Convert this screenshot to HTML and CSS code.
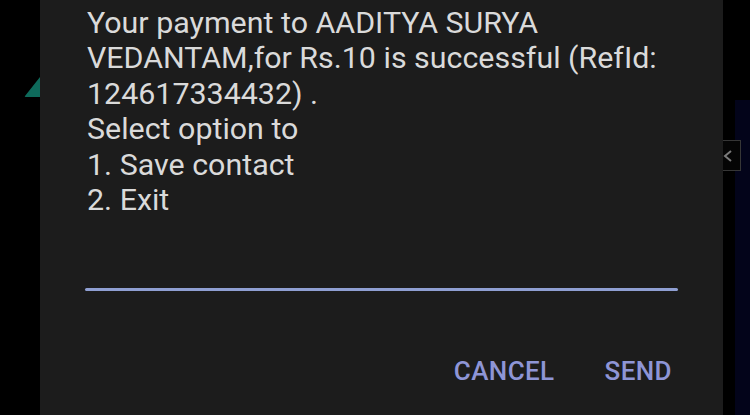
FILE: index.html
```html
<!DOCTYPE html>
<html lang="en">
<head>
  <meta charset="UTF-8" />
  <meta name="viewport" content="width=device-width, initial-scale=1.0" />
  <title>USSD</title>
  <link rel="stylesheet" href="styles.css">
</head>
<body>
  <div class="screen">
    <div class="left-gutter">
      <svg class="fab-tip" width="20" height="22" viewBox="0 0 20 22">
        <path d="M16 1 L1 20 Q0 21 2 21 L16 21 Z" fill="#0e6a5b"/>
      </svg>
    </div>

    <div class="dialog">
      <p class="message">
        Your payment to AADITYA SURYA<br>
        VEDANTAM,for Rs.10 is successful (RefId:<br>
        124617334432) .<br>
        Select option to<br>
        1. Save contact<br>
        2. Exit
      </p>
      <div class="input-line"></div>
      <div class="actions">
        <button class="btn">CANCEL</button>
        <button class="btn">SEND</button>
      </div>
    </div>

    <div class="right-strip">
      <div class="navy"></div>
    </div>

    <!-- tab handle peeking out behind the dialog -->
    <div class="handle">
      <svg width="10" height="14" viewBox="0 0 10 14">
        <path d="M8 2 L2 7 L8 12" fill="none" stroke="#7a7a7a" stroke-width="2"/>
      </svg>
    </div>
  </div>
</body>
</html>
```

FILE: styles.css
```css
body {
  margin: 0;
  background-color: #000;
  font-family: Roboto, 'Liberation Sans', sans-serif;
  overflow: hidden;
}
.screen {
  width: 750px;
  height: 415px;
  display: flex;
  position: relative;
}
.left-gutter {
  width: 40px;
  flex-shrink: 0;
  position: relative;
}
.fab-tip {
  position: absolute;
  top: 76px;
  left: 24px;
}
.dialog {
  width: 683px;
  flex-shrink: 0;
  background-color: #1c1c1c;
  display: flex;
  flex-direction: column;
  position: relative;
  z-index: 2;
}
.message {
  margin: 0;
  padding: 5px 0 0 47px;
  color: #dadada;
  font-size: 30.4px;
  line-height: 35.4px;
  white-space: nowrap;
}
.input-line {
  margin: 71px 45px 0 45px;
  height: 3px;
  border-radius: 2px;
  background-color: #8f9fd2;
}
.actions {
  display: flex;
  justify-content: flex-end;
  gap: 50px;
  margin-top: 67px;
  padding-right: 51px;
}
.btn {
  border: none;
  background: none;
  padding: 0;
  font-family: Roboto, 'Liberation Sans', sans-serif;
  font-weight: 500;
  font-size: 26px;
  line-height: 26px;
  color: #8e95d6;
  letter-spacing: 0.4px;
}
.right-strip {
  flex: 1;
  display: flex;
  justify-content: flex-end;
}
.navy {
  width: 15px;
  margin-top: 100px;
  background-color: #03041a;
}
.handle {
  position: absolute;
  left: 715px;
  top: 140px;
  width: 26px;
  height: 31px;
  border: 1px solid #363636;
  background-color: #050505;
  z-index: 3;
  display: flex;
  align-items: center;
  padding-left: 7px;
  box-sizing: border-box;
  clip-path: inset(0 0 0 8px);
}
```
